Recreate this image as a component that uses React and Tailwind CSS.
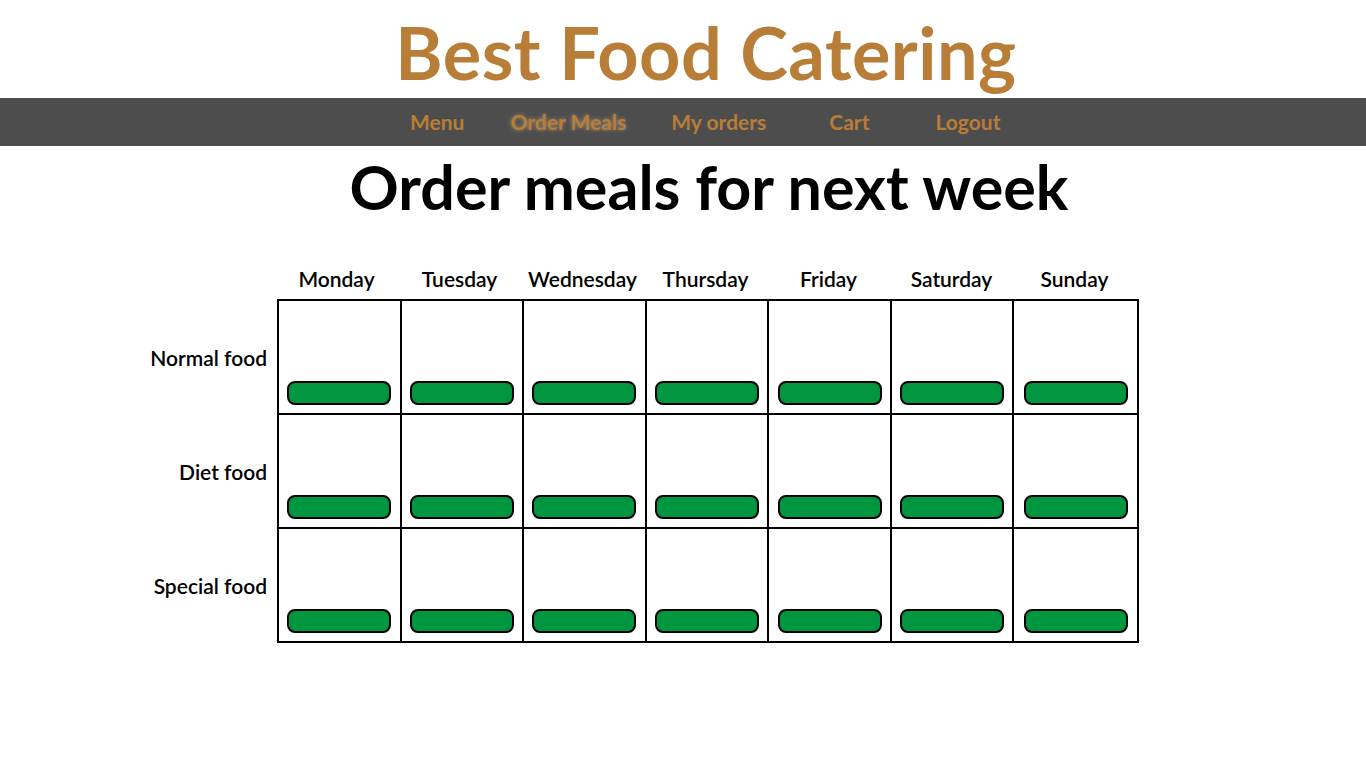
const days = ["Monday", "Tuesday", "Wednesday", "Thursday", "Friday", "Saturday", "Sunday"];
const rows = ["Normal food", "Diet food", "Special food"];

const navItems = [
  { label: "Menu", cls: "ml-[410px]" },
  { label: "Order Meals", cls: "ml-[46px] [text-shadow:0_0_4px_rgba(255,220,180,0.45)]" },
  { label: "My orders", cls: "ml-[45px]" },
  { label: "Cart", cls: "ml-[63px]" },
  { label: "Logout", cls: "ml-[66px]" },
];

function MealCell({ last, lastRow }) {
  return (
    <div
      className={`w-[123px] flex items-end justify-center pb-[8px] border-black ${
        last ? "" : "border-r-2"
      } ${lastRow ? "h-[112px]" : "h-[114px] border-b-2"}`}
    >
      <button className="h-[24px] w-[104px] rounded-[8px] border-2 border-black bg-[#009640]" />
    </div>
  );
}

export default function App() {
  return (
    <div className="min-h-screen bg-white font-['Lato',sans-serif]">
      <header className="h-[98px] flex items-center justify-center pl-[46px]">
        <h1 className="text-[72px] font-bold text-[#b87d37] tracking-[0.5px] leading-none pt-[6px]">
          Best Food Catering
        </h1>
      </header>
      <nav className="h-[48px] bg-[#4d4d4d] flex items-center">
        {navItems.map((n) => (
          <a key={n.label} className={`text-[21px] font-bold text-[#b87d37] ${n.cls}`}>
            {n.label}
          </a>
        ))}
      </nav>
      <div className="flex justify-center pl-[52px] mt-[10px]">
        <h2 className="text-[61px] font-bold text-black leading-none">
          Order meals for next week
        </h2>
      </div>
      <div className="flex mt-[40px] pl-[127px]">
        <div className="w-[150px] pt-[45px] flex flex-col">
          {rows.map((r) => (
            <div key={r} className="h-[114px] flex items-center justify-end pr-[10px] pb-[2px] text-[21px] font-semibold text-black">
              {r}
            </div>
          ))}
        </div>
        <div className="flex flex-col">
          <div className="flex h-[42px] pt-[7px] ml-[-2px]">
            {days.map((d) => (
              <div key={d} className="w-[123px] text-center text-[21px] font-semibold text-black leading-[30px]">
                {d}
              </div>
            ))}
          </div>
          <div className="border-2 border-black flex flex-col w-[862px] overflow-hidden">
            {rows.map((r, ri) => (
              <div key={r} className="flex">
                {days.map((d, di) => (
                  <MealCell key={d} last={di === days.length - 1} lastRow={ri === rows.length - 1} />
                ))}
              </div>
            ))}
          </div>
        </div>
      </div>
    </div>
  );
}
